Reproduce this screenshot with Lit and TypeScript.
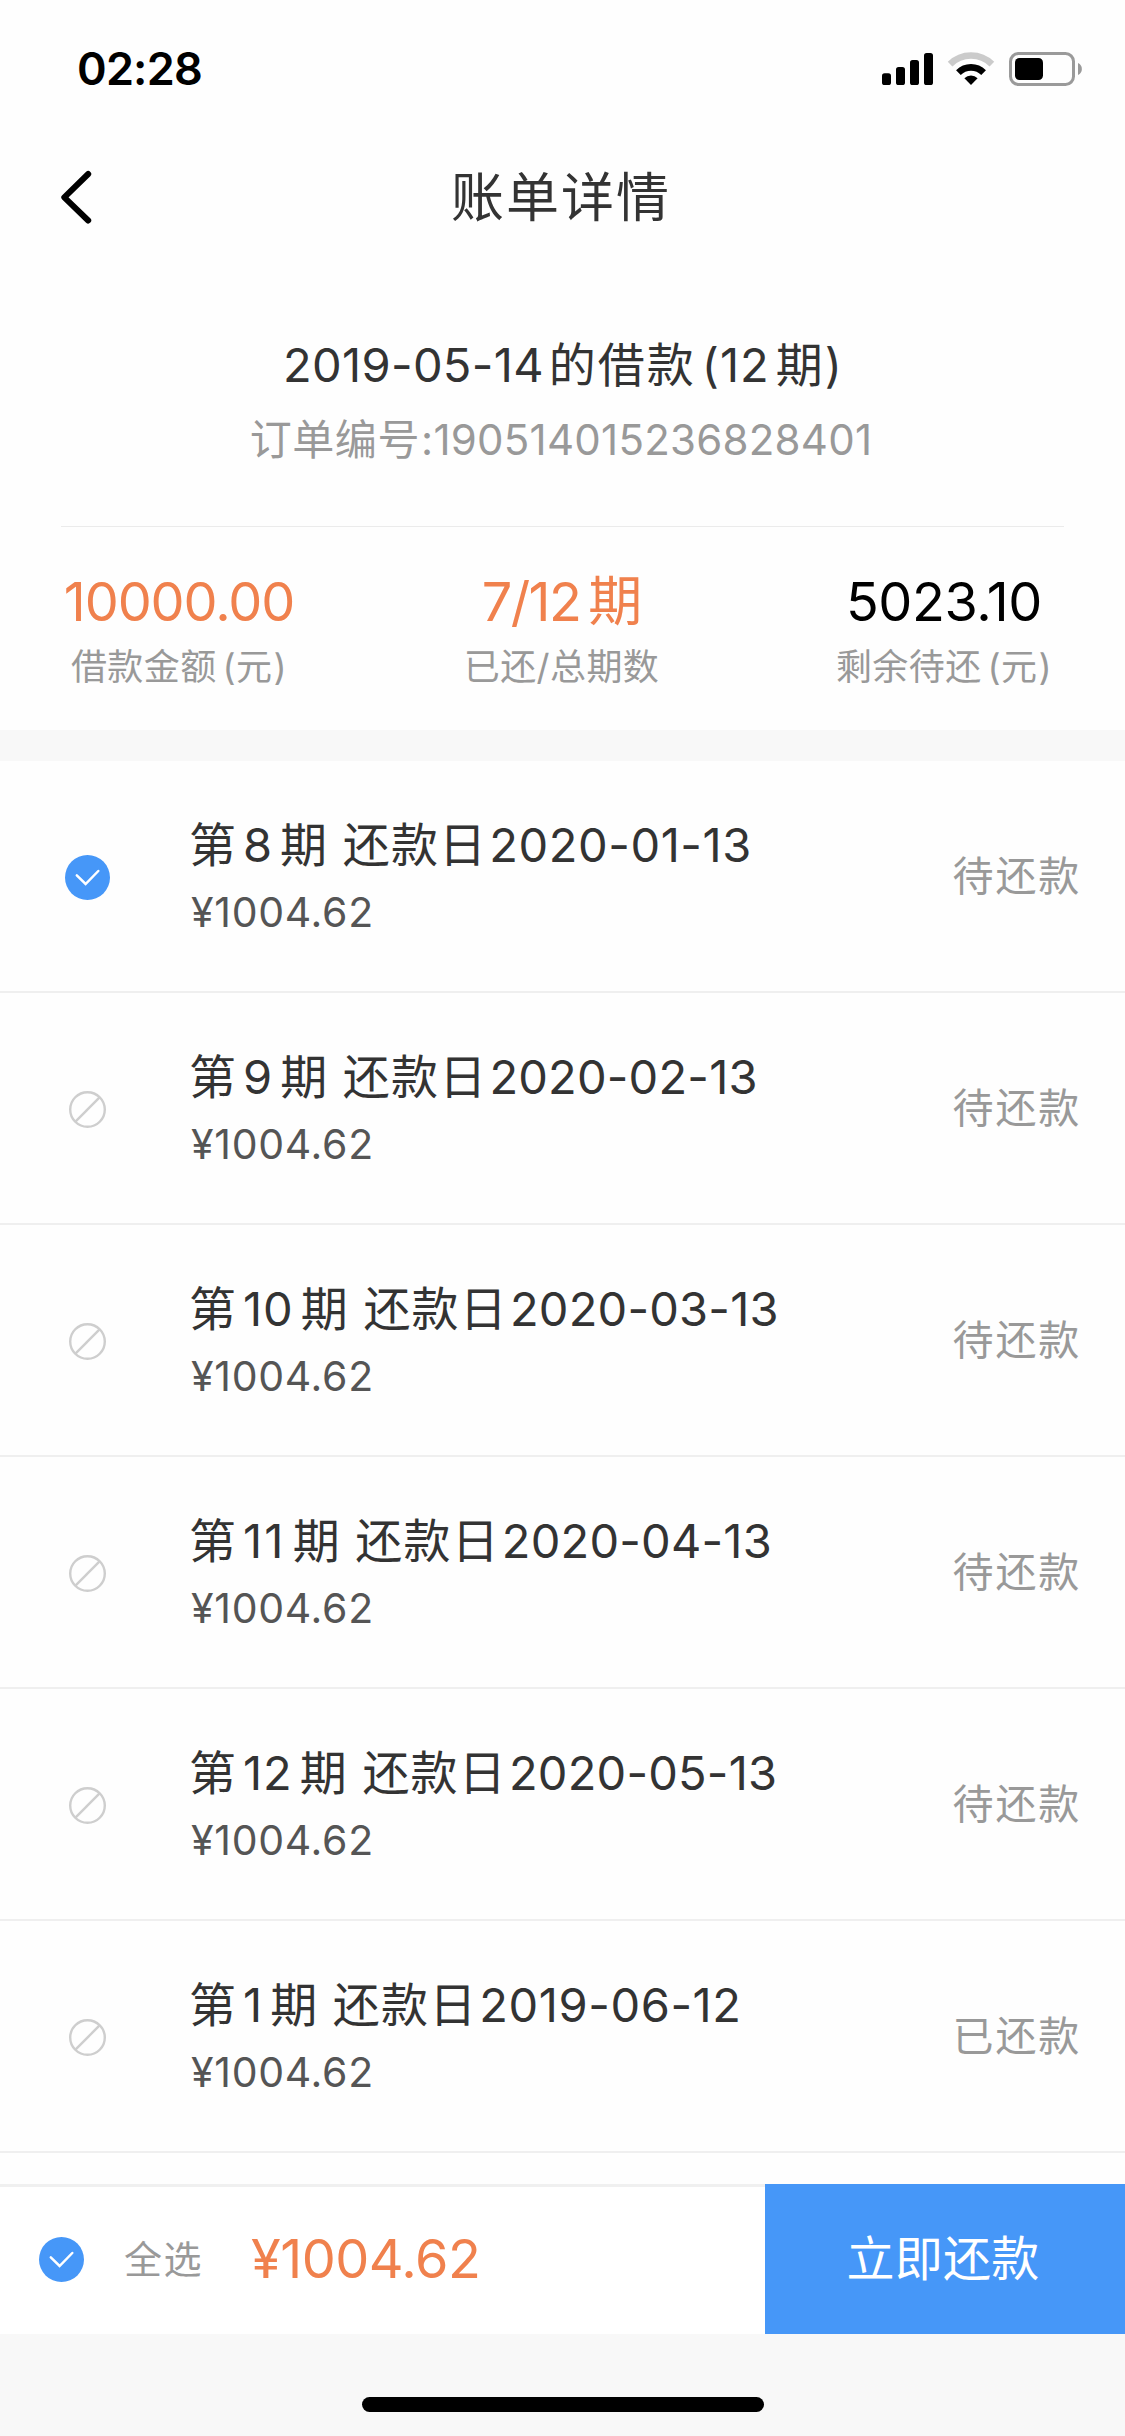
import { LitElement, html, css, svg } from "lit";
import { customElement, property } from "lit/decorators.js";
import { styleMap } from "lit/directives/style-map.js";

interface Installment {
  term: number;
  due: string;
  amount: string;
  status: string;
  selected: boolean;
}

const INSTALLMENTS: Installment[] = [
  { term: 8, due: "2020-01-13", amount: "1004.62", status: "待还款", selected: true },
  { term: 9, due: "2020-02-13", amount: "1004.62", status: "待还款", selected: false },
  { term: 10, due: "2020-03-13", amount: "1004.62", status: "待还款", selected: false },
  { term: 11, due: "2020-04-13", amount: "1004.62", status: "待还款", selected: false },
  { term: 12, due: "2020-05-13", amount: "1004.62", status: "待还款", selected: false },
  { term: 1, due: "2019-06-12", amount: "1004.62", status: "已还款", selected: false },
];

/** The digit 1 is narrow, so strings with several of them are set a little wider. */
const tracking = (text: string, base: number, extra: number) => {
  const ones = text.split("1").length - 1;
  return styleMap({ letterSpacing: `${(base + extra * Math.max(0, ones - 1)).toFixed(2)}px` });
};

const checkIcon = html`<svg class="icon" width="45" height="45" viewBox="0 0 45 45">
  <circle cx="22.5" cy="22.5" r="22.5" fill="#4697f8" />
  <path d="M11.8 20.3 L20.6 29 L33.3 16" fill="none" stroke="#fff" stroke-width="2.5" stroke-linecap="round" stroke-linejoin="miter" />
</svg>`;

const blockedIcon = html`<svg class="icon" width="45" height="45" viewBox="0 0 45 45">
  <circle cx="22.5" cy="22.5" r="17.3" fill="none" stroke="#cecece" stroke-width="2.4" />
  <path d="M10.2 34.8 L34.8 10.2" stroke="#cecece" stroke-width="2.4" />
</svg>`;

@customElement("app-status-bar")
class AppStatusBar extends LitElement {
  static styles = css`
    :host {
      display: flex;
      justify-content: space-between;
      height: 132px;
      box-sizing: border-box;
      padding: 46px 43px 0 77px;
      font: 600 45px/46px Inter, "Noto Sans CJK SC", sans-serif;
      color: #000;
    }
    .time { letter-spacing: -0.8px; }
    .signals { display: block; margin-top: 4px; }
  `;
  render() {
    const bars = [
      [0, 21.3, 11.7],
      [14, 15, 18],
      [28, 8, 25],
      [42, 1, 32],
    ];
    return html`<span class="time">02:28</span>
      <svg class="signals" width="202" height="38" viewBox="880 50 202 38">
        ${bars.map(([x, y, h]) => svg`<rect x=${882 + x} y=${52 + y} width="9" height=${h} rx="2.6" />`)}
        <g fill="none">
          <path d="M950.1 64.2 A29.6 29.6 0 0 1 991.9 64.2" stroke="#cbcbcb" stroke-width="6.6" />
          <path d="M958.4 72.6 A17.8 17.8 0 0 1 983.6 72.6" stroke="#000" stroke-width="6.6" />
        </g>
        <path d="M971 85 L964.4 78.2 A9.3 9.3 0 0 1 977.6 78.2 Z" />
        <rect x="1010.5" y="53.5" width="63" height="31" rx="8" fill="none" stroke="#9a9a9a" stroke-width="3" />
        <rect x="1015" y="58" width="28" height="22" rx="4.5" />
        <path d="M1078 63 A6.6 6.6 0 0 1 1078 75 Z" fill="#9a9a9a" />
      </svg>`;
  }
}

@customElement("app-bill-row")
class AppBillRow extends LitElement {
  @property({ attribute: false }) item!: Installment;
  static styles = css`
    :host {
      display: flex;
      height: 232px;
      box-sizing: border-box;
      border-bottom: 2px solid #efefef;
      padding: 0 44px 0 65px;
      font-family: Inter, "Noto Sans CJK SC", sans-serif;
    }
    .icon { display: block; margin-top: 94px; }
    .info { flex: 1; margin: 56px 0 0 79px; }
    .term { font-size: 47px; line-height: 56px; color: #333; display: flex; white-space: pre; }
    .amount { font-size: 41px; line-height: 52px; margin-top: 13px; padding-left: 2px; letter-spacing: 0.7px; color: #555; }
    .no { margin: 0 7px; }
    .day { letter-spacing: 1.2px; margin-right: 2px; }
    .state { font-size: 41px; line-height: 56px; letter-spacing: 1.8px; color: #999; margin-top: 87px; }
  `;
  render() {
    const i = this.item;
    return html`${i.selected ? checkIcon : blockedIcon}
      <div class="info">
        <div class="term"><span>第</span><span class="no" style=${tracking(String(i.term), 1, 1.2)}>${i.term}</span><span class="day">期 还款日</span><span style=${tracking(i.due, 0.2, 0.38)}>${i.due}</span></div>
        <div class="amount">¥${i.amount}</div>
      </div>
      <span class="state">${i.status}</span>`;
  }
}

@customElement("app-root")
class AppRoot extends LitElement {
  static styles = css`
    :host {
      display: flex;
      flex-direction: column;
      width: 1125px;
      height: 2436px;
      overflow: hidden;
      background: #fefefe;
      font-family: Inter, "Noto Sans CJK SC", sans-serif;
      color: #333;
    }
    .nav { display: grid; grid-template-columns: 120px 1fr 120px; align-items: center; height: 132px; }
    .back { display: block; margin-left: 60px; }
    .title { font-size: 53px; line-height: 60px; letter-spacing: 2px; text-align: center; margin-right: 3px; }
    .loan { display: flex; flex-direction: column; align-items: center; margin: 0 61px; border-bottom: 1px solid #ebebeb; padding-top: 72px; height: 190px; }
    .loan-title { display: flex; font-size: 47px; line-height: 58px; }
    .date { letter-spacing: 0.33px; }
    .of { letter-spacing: 2px; margin: 0 6px 0 5px; }
    .count { letter-spacing: 1px; margin-right: 6px; }
    .unit { margin-right: 2px; }
    .order { display: flex; font-size: 42px; line-height: 56px; margin: 18px 3px 0 0; color: #999; }
    .order-name { letter-spacing: 0.6px; }
    .order-no { letter-spacing: 0.25px; margin-left: 1px; }
    .stats { display: grid; grid-template-columns: 240px 1fr 240px; justify-items: center; height: 203px; padding: 0 61px 0 59px; box-sizing: border-box; }
    .stat { display: flex; flex-direction: column; align-items: center; padding-top: 43px; }
    .value { display: flex; font-size: 54px; line-height: 64px; letter-spacing: -1.1px; color: #f0814d; }
    .value.dark { color: #000; letter-spacing: -0.4px; }
    .periods { letter-spacing: -1.6px; margin-right: 8px; }
    .label { display: flex; font-size: 36px; line-height: 44px; margin-top: 11px; letter-spacing: 0.4px; color: #999; }
    .open { margin-left: 6px; }
    .close { margin-left: 1px; }
    .band { height: 31px; background: #f8f8f8; }
    .list { flex: 1; overflow: hidden; }
    .footer { display: flex; height: 150px; background: #fff; }
    .summary { flex: 1; display: flex; align-items: center; border-top: 3px solid #f0f0f0; padding: 0 0 4px 39px; line-height: 60px; }
    .summary .icon { margin-top: 2px; }
    .all { font-size: 38px; letter-spacing: 1.5px; margin-left: 40px; color: #999; }
    .total { font-size: 54px; letter-spacing: -0.5px; margin-left: 48px; color: #f0814d; }
    .pay { all: unset; box-sizing: border-box; width: 360px; padding-right: 4px; text-align: center; background: #4697f8; color: #fff; font-size: 48px; line-height: 148px; letter-spacing: 0.3px; height: 150px; display: block; }
    .home { display: flex; justify-content: center; height: 102px; background: #f8f8f8; }
    .pill { width: 402px; height: 15px; border-radius: 8px; background: #000; margin-top: 63px; }
  `;
  render() {
    return html`<app-status-bar></app-status-bar>
      <header class="nav">
        <svg class="back" width="34" height="56" viewBox="60 170 34 56">
          <path d="M88.2 174 L64.3 197.3 L88.2 220.5" fill="none" stroke="#000" stroke-width="6" stroke-linecap="round" stroke-linejoin="round" />
        </svg>
        <span class="title">账单详情</span>
      </header>
      <section class="loan">
        <div class="loan-title"><span class="date">2019-05-14</span><span class="of">的借款</span><span class="count">(12</span><span class="unit">期</span><span>)</span></div>
        <div class="order"><span class="order-name">订单编号</span><span class="order-no">:190514015236828401</span></div>
      </section>
      <section class="stats">
        <div class="stat"><div class="value">10000.00</div><div class="label"><span>借款金额</span><span class="open">(元</span><span class="close">)</span></div></div>
        <div class="stat"><div class="value"><span class="periods">7/12</span><span>期</span></div><div class="label">已还/总期数</div></div>
        <div class="stat"><div class="value dark">5023.10</div><div class="label"><span>剩余待还</span><span class="open">(元</span><span class="close">)</span></div></div>
      </section>
      <div class="band"></div>
      <main class="list">${INSTALLMENTS.map((i) => html`<app-bill-row .item=${i}></app-bill-row>`)}</main>
      <footer class="footer">
        <div class="summary">${checkIcon}<span class="all">全选</span><span class="total">¥1004.62</span></div>
        <button class="pay">立即还款</button>
      </footer>
      <div class="home"><div class="pill"></div></div>`;
  }
}
